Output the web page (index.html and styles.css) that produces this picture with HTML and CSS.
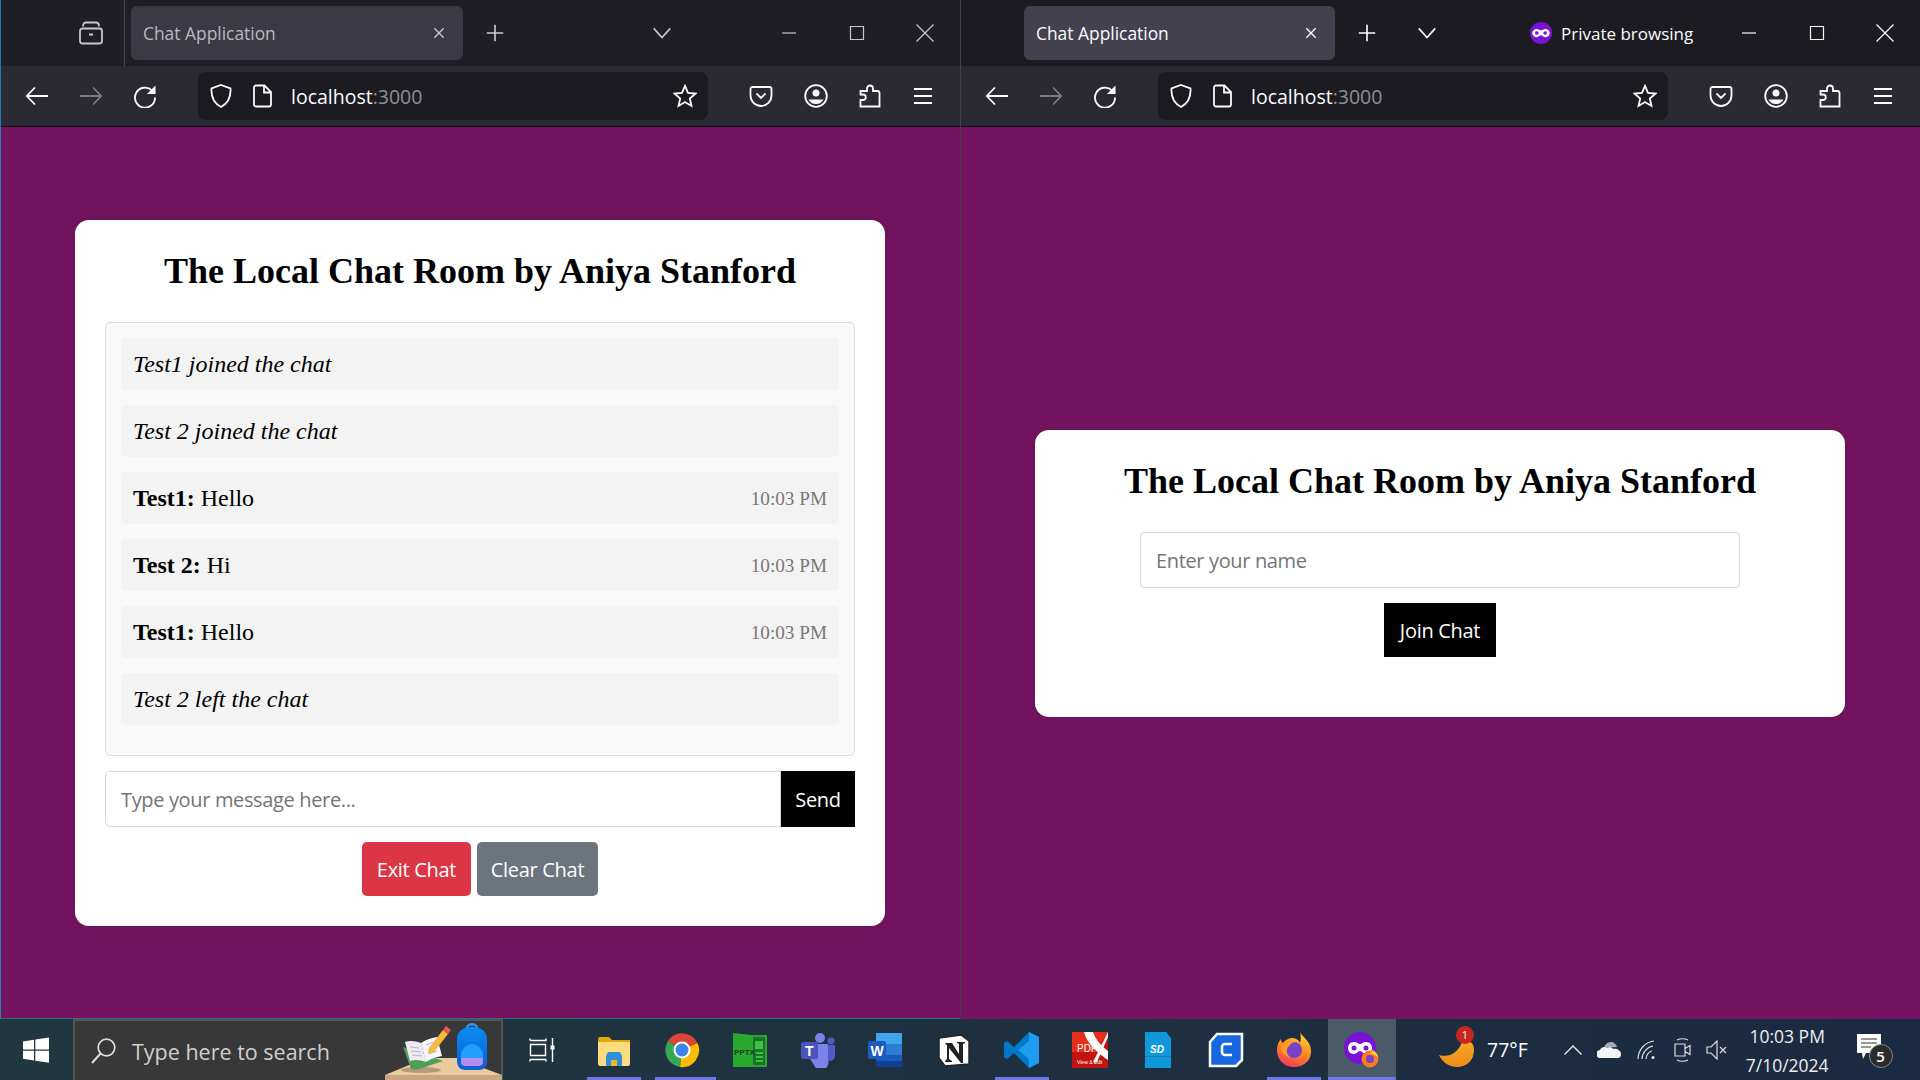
FILE: index.html
```html
<!DOCTYPE html>
<html lang="en">
  <head>
    <meta charset="UTF-8" />
    <meta name="viewport" content="width=device-width, initial-scale=1.0" />
    <title>Chat Application</title>
    <link rel="stylesheet" href="styles.css">
  </head>
  <body>
    <!-- shared browser icons -->
    <svg class="sprite" width="0" height="0">
      <symbol id="i-tabs" viewBox="0 0 24 24"><path d="M4 5.5C4 3 5 1.5 7 1.500h10c2 0 3 1.500 3 4M3.500 7.500h17a2.500 2.500 0 0 1 2.500 2.500v10a2.500 2.500 0 0 1-2.500 2.500h-17A2.500 2.500 0 0 1 1 20V10a2.500 2.500 0 0 1 2.500-2.500zM10 13.500h4"/></symbol>
      <symbol id="i-x" viewBox="0 0 24 24"><path d="M5 5l14 14M19 5L5 19"/></symbol>
      <symbol id="i-wx" viewBox="0 0 24 24"><path d="M3.500 3.500l17 17M20.500 3.500l-17 17"/></symbol>
      <symbol id="i-plus" viewBox="0 0 24 24"><path d="M12 3v18M3 12h18"/></symbol>
      <symbol id="i-chev" viewBox="0 0 24 24"><path d="M3 7l9 10 9-10"/></symbol>
      <symbol id="i-back" viewBox="0 0 24 24"><path d="M23 12H2M10 3.500L1.800 12l8.200 8.500"/></symbol>
      <symbol id="i-forward" viewBox="0 0 24 24"><path d="M1 12h21M14 3.500l8.200 8.500L14 20.500"/></symbol>
      <symbol id="i-reload" viewBox="0 0 24 24"><path d="M19 6.500A10 10 0 1 0 22 13.500"/><path class="solid" d="M22.500 1.500v8.500h-8.500z"/></symbol>
      <symbol id="i-shield" viewBox="0 0 24 24"><path d="M12 1l9.500 3.500c.5 8.500-1.500 14.500-9.500 18.500-8-4-10-10-9.500-18.500z"/></symbol>
      <symbol id="i-page" viewBox="0 0 24 24"><path d="M6 1.500h8.500L21 8v12.500a2 2 0 0 1-2 2H6a2 2 0 0 1-2-2v-17a2 2 0 0 1 2-2zM14 1.500V8.500h7"/></symbol>
      <symbol id="i-star" viewBox="0 0 24 24"><path d="M12 1.800l3 7 7.500.7-5.700 5 1.700 7.500-6.500-3.900L5.500 22l1.700-7.500-5.700-5 7.500-.7z"/></symbol>
      <symbol id="i-pocket" viewBox="0 0 24 24"><path d="M3.500 3h17a2 2 0 0 1 2 2v6.500a10.500 10.500 0 0 1-21 0V5a2 2 0 0 1 2-2zM7.500 9.500L12 14l4.500-4.500"/></symbol>
      <symbol id="i-account" viewBox="0 0 24 24"><circle cx="12" cy="12" r="10.800"/><circle class="solid" cx="12" cy="9" r="3.500"/><path class="solid" d="M4.500 15.500h15c-1.500 3-4 4.500-7.500 4.500s-6-1.500-7.500-4.500z"/></symbol>
      <symbol id="i-ext" viewBox="0 0 24 24"><path d="M2.500 22.500v-6.500h2.500a2.500 2.500 0 0 0 0-5.500H2.500V7h6.500V4.500a3 3 0 0 1 6 0V7h4.500a2 2 0 0 1 2 2v13.500z"/></symbol>
      <symbol id="i-menu" viewBox="0 0 24 24"><path d="M3 5h18M3 12h18M3 19h18"/></symbol>
      <symbol id="i-min" viewBox="0 0 24 24"><path d="M5 12h14"/></symbol>
      <symbol id="i-max" viewBox="0 0 24 24"><path d="M5.500 5.500h13v13h-13z"/></symbol>
    </svg>

    <div class="screen">
      <!-- left window: chat view -->
      <section class="window window-left">
        <div class="tabbar tabbar-dim">
          <svg class="icon ic-tabs"><use href="#i-tabs"/></svg>
          <span class="tab-divider"></span>
          <div class="tab tab-left">
            <span class="tab-title">Chat Application</span>
            <svg class="icon ic-tabx"><use href="#i-x"/></svg>
          </div>
          <svg class="icon ic-plus"><use href="#i-plus"/></svg>
          <svg class="icon ic-chev chev-left"><use href="#i-chev"/></svg>
          <div class="win-buttons">
            <svg class="icon"><use href="#i-min"/></svg>
            <svg class="icon"><use href="#i-max"/></svg>
            <svg class="icon"><use href="#i-wx"/></svg>
          </div>
        </div>
        <div class="toolbar">
          <svg class="icon nav"><use href="#i-back"/></svg>
          <svg class="icon nav off"><use href="#i-forward"/></svg>
          <svg class="icon nav"><use href="#i-reload"/></svg>
          <div class="urlbar">
            <svg class="icon ic-shield"><use href="#i-shield"/></svg>
            <svg class="icon ic-page"><use href="#i-page"/></svg>
            <span class="url">localhost<span class="url-port">:3000</span></span>
            <svg class="icon ic-star"><use href="#i-star"/></svg>
          </div>
          <svg class="icon tool first"><use href="#i-pocket"/></svg>
          <svg class="icon tool"><use href="#i-account"/></svg>
          <svg class="icon tool ext"><use href="#i-ext"/></svg>
          <svg class="icon tool"><use href="#i-menu"/></svg>
        </div>
        <main class="page">
          <div class="card">
            <h1>The Local Chat Room by Aniya Stanford</h1>
            <div class="messages">
              <div class="msg note">Test1 joined the chat</div>
              <div class="msg note">Test 2 joined the chat</div>
              <div class="msg"><span><b>Test1:</b> Hello</span><span class="time">10:03 PM</span></div>
              <div class="msg"><span><b>Test 2:</b> Hi</span><span class="time">10:03 PM</span></div>
              <div class="msg"><span><b>Test1:</b> Hello</span><span class="time">10:03 PM</span></div>
              <div class="msg note">Test 2 left the chat</div>
            </div>
            <form class="send-row">
              <input class="field" type="text" placeholder="Type your message here..." />
              <button class="btn btn-black btn-send" type="button">Send</button>
            </form>
            <div class="actions">
              <button class="btn btn-red" type="button">Exit Chat</button>
              <button class="btn btn-grey" type="button">Clear Chat</button>
            </div>
          </div>
        </main>
      </section>

      <!-- right window: private browsing, join view -->
      <section class="window window-right">
        <div class="tabbar">
          <div class="tab tab-right">
            <span class="tab-title">Chat Application</span>
            <svg class="icon ic-tabx"><use href="#i-x"/></svg>
          </div>
          <svg class="icon ic-plus"><use href="#i-plus"/></svg>
          <svg class="icon ic-chev chev-right"><use href="#i-chev"/></svg>
          <div class="private">
            <svg class="ic-private" viewBox="0 0 24 24"><circle cx="12" cy="12" r="12" fill="#7a12d4"/><path d="M7.500 7.500c2 0 3 1.500 4.500 1.500s2.500-1.500 4.500-1.500c3 0 5 2 5 4.500s-2 4.500-4.500 4.500c-2.500 0-3.500-2-5-2s-2.500 2-5 2C4.500 16.500 2.500 14.500 2.500 12s2-4.500 5-4.500z" fill="#fff"/><circle cx="7.500" cy="12" r="2" fill="#7a12d4"/><circle cx="16.500" cy="12" r="2" fill="#7a12d4"/></svg>
            <span>Private browsing</span>
          </div>
          <div class="win-buttons">
            <svg class="icon"><use href="#i-min"/></svg>
            <svg class="icon"><use href="#i-max"/></svg>
            <svg class="icon"><use href="#i-wx"/></svg>
          </div>
        </div>
        <div class="toolbar">
          <svg class="icon nav"><use href="#i-back"/></svg>
          <svg class="icon nav off"><use href="#i-forward"/></svg>
          <svg class="icon nav"><use href="#i-reload"/></svg>
          <div class="urlbar">
            <svg class="icon ic-shield"><use href="#i-shield"/></svg>
            <svg class="icon ic-page"><use href="#i-page"/></svg>
            <span class="url">localhost<span class="url-port">:3000</span></span>
            <svg class="icon ic-star"><use href="#i-star"/></svg>
          </div>
          <svg class="icon tool first"><use href="#i-pocket"/></svg>
          <svg class="icon tool"><use href="#i-account"/></svg>
          <svg class="icon tool ext"><use href="#i-ext"/></svg>
          <svg class="icon tool"><use href="#i-menu"/></svg>
        </div>
        <main class="page">
          <div class="card">
            <h1>The Local Chat Room by Aniya Stanford</h1>
            <form class="join-form">
              <input class="field field-name" type="text" placeholder="Enter your name" />
              <button class="btn btn-black btn-join" type="button">Join Chat</button>
            </form>
          </div>
        </main>
      </section>
    </div>

    <footer class="taskbar">
      <div class="start">
        <svg width="26" height="26" viewBox="0 0 26 26"><path fill="#fff" d="M0 4.500l11-1.700v9.700H0zM12.300 2.600L26 .5v12H12.300zM0 13.800h11v9.700L0 21.800zM12.300 13.800H26v12l-13.700-2.100z"/></svg>
      </div>
      <div class="search">
        <svg class="ic-search" width="26" height="26" viewBox="0 0 26 26"><circle cx="15.500" cy="9.500" r="8.300" fill="none" stroke="#ddd" stroke-width="1.700"/><path d="M9.500 15.500L1 25" stroke="#ddd" stroke-width="2" fill="none"/></svg>
        <span class="search-text">Type here to search</span>
        <svg class="search-art" width="118" height="60" viewBox="0 0 118 60">
          <defs><linearGradient id="bag" x1="0" y1="0" x2="0" y2="1"><stop offset="0" stop-color="#0a8cf5"/><stop offset="1" stop-color="#0a5fd0"/></linearGradient></defs>
          <path fill="#e9cb9f" d="M0 55L41 38h31l45 17v5H0z"/>
          <path fill="#c9a67e" d="M0 55h117v5H0z"/>
          <ellipse cx="36" cy="50" rx="20" ry="3" fill="#b7987a"/>
          <path fill="#4f9e57" d="M18 27l40 14-27 9-5-1z"/>
          <path fill="#eeeaf2" d="M20 22c5-2 11-1 16 1l5 19c-5-2-11-3-16-1z"/>
          <path fill="#f8f6fa" d="M36 23c4-3 10-5 16-6l5 19c-6 1-12 3-16 6z"/>
          <path stroke="#b9b5c4" stroke-width="1" fill="none" d="M25 27l9 1M26 31l10 1M27 35l10 1M41 25l8-3M43 30l8-3M44 34l8-3"/>
          <path fill="#f5b942" d="M44 28l14-18 5 4-14 18-6 2z"/>
          <path fill="#ea5a4f" d="M58 10l3-4 5 4-3 4z"/>
          <path fill="url(#bag)" d="M72 20c0-9 6-13 15-13s15 4 15 13v21c0 5-3 9-8 9H80c-5 0-8-4-8-9z"/>
          <path fill="none" stroke="#2a8ff0" stroke-width="2.500" d="M82 8c0-5 10-5 10 0"/>
          <path fill="#1fa0ff" d="M76 36c0-7 5-12 11-12s11 5 11 12v4H76z"/>
          <path fill="#b58cf2" d="M76 38h22v4c0 3-2 4-5 4H81c-3 0-5-1-5-4z"/>
        </svg>
      </div>
      <div class="task-icons">
        <div class="slot slot-view">
          <svg width="26" height="24" viewBox="0 0 26 24" fill="none" stroke="#fff" stroke-width="1.400"><path d="M1 2.500h16V.5M1 .5v2M1.500 6.500h15v11h-15zM1 21.500h16M1 21.500v2M17 21.500v2M23.500 0v24"/><rect class="dot" x="21.500" y="7.500" width="4" height="4" fill="#fff" stroke="none"/></svg>
        </div>
        <div class="slot open">
          <svg class="app" viewBox="0 0 36 36"><path fill="#e0a90e" d="M2 7a2 2 0 0 1 2-2h9l3 3h18v5H2z"/><path fill="#fcdc7c" d="M2 10h30a2 2 0 0 1 2 2v20a2 2 0 0 1-2 2H4a2 2 0 0 1-2-2z"/><path fill="#2f8fd8" d="M10 34V24l2-4h12l2 4v10h-5v-6h-6v6z"/><path fill="#f3b71b" d="M15 28h6v6h-6z"/></svg>
        </div>
        <div class="slot open open-stack">
          <svg class="app" viewBox="0 0 36 36"><path fill="#db4437" d="M18 18L4 9A17 17 0 0 1 33.500 11z"/><path fill="#34a853" d="M18 18L4 9A17 17 0 0 0 16 35z"/><path fill="#fbbc05" d="M18 18l15.500-7A17 17 0 0 1 16 35z"/><circle cx="18" cy="18" r="8.500" fill="#fff"/><circle cx="18" cy="18" r="6.500" fill="#3f83ea"/></svg>
        </div>
        <div class="slot">
          <svg class="app" viewBox="0 0 36 36"><path fill="#28a82e" d="M1 1l19 2h15v32H20l-19 0z"/><path fill="#1d6f2b" d="M21 5h12v28H21z"/><path fill="#3dc043" d="M23 9h8v8h-8zM24 20h7v2h-7zM24 24h7v2h-7zM24 28h7v2h-7z"/><text class="pptx" x="2" y="23">PPTX</text></svg>
        </div>
        <div class="slot">
          <svg class="app" viewBox="0 0 36 36"><circle cx="20" cy="6" r="5" fill="#7b83eb"/><circle cx="31" cy="9" r="3.500" fill="#5059c9"/><path fill="#5059c9" d="M25 13h10v11a5 5 0 0 1-8 4z"/><path fill="#7b83eb" d="M10 12h18v16a7 7 0 0 1-14 5l-4-6z"/><rect x="1" y="10" width="17" height="17" rx="2" fill="#4b53bc"/><text class="app-letter" x="5" y="24">T</text></svg>
        </div>
        <div class="slot">
          <svg class="app" viewBox="0 0 36 36"><path fill="#41a5ee" d="M8 1h26v11H8z"/><path fill="#2b7cd3" d="M8 12h26v11H8z"/><path fill="#185abd" d="M8 23h26v6H8z"/><path fill="#103f91" d="M8 29h26v6H8z"/><rect x="0" y="9" width="18" height="18" rx="2" fill="#1a5cc0"/><text class="app-letter" x="2.500" y="24">W</text></svg>
        </div>
        <div class="slot">
          <svg class="app" viewBox="0 0 36 36"><path fill="#fff" stroke="#222" stroke-width="1.500" d="M3 6l22-3 8 6v23l-24 2-6-8z"/><path fill="#222" d="M10 11h6l7 11V12l-2-1v-1h8v1l-2 1v19h-2L13 16v11l3 2v1H9v-1l2-2V13l-2-1z"/></svg>
        </div>
        <div class="slot open">
          <svg class="app" viewBox="0 0 36 36"><path fill="#0078c8" d="M25 0l10 5v26l-10 5-15-15-7 6-3-2v-14l3-2 7 6z"/><path fill="#1f9cf0" d="M25 0l10 5v26l-10 5zM25 9L14 18l11 9z" fill-rule="evenodd"/></svg>
        </div>
        <div class="slot">
          <svg class="app" viewBox="0 0 36 36"><path fill="#c1140f" d="M0 0h36v36H0z"/><path fill="#e7301c" d="M0 0h36L24 20H0z"/><path fill="#fff" d="M12 0h9c2 6 6 12 15 19v9C24 20 15 11 12 0zM36 0v5L25 30h-4z"/><text class="pdf-big" x="5" y="20">PDF</text><text class="pdf-small" x="5" y="32">View &amp; Edit</text></svg>
        </div>
        <div class="slot">
          <svg class="app" viewBox="0 0 36 36"><path fill="#0f98dc" d="M4 0h21l5 6v30H4z" transform="translate(1)"/><path fill="#0b80bf" d="M5 24h26v1H5zM8 0h1v4H8z"/><text class="sd" x="10" y="21">SD</text></svg>
        </div>
        <div class="slot">
          <svg class="app" viewBox="0 0 36 36"><path fill="#1667e0" stroke="#fff" stroke-width="2.500" d="M9 2h25v26l-6 6H2V10z"/><path fill="none" stroke="#fff" stroke-width="2.500" d="M24 12h-7a3 3 0 0 0-3 3v5a3 3 0 0 0 3 3h7"/></svg>
        </div>
        <div class="slot open">
          <svg class="app" viewBox="0 0 36 36">
            <defs><linearGradient id="fx" x1="0.700" y1="0" x2="0.300" y2="1"><stop offset="0" stop-color="#ffd43a"/><stop offset="0.500" stop-color="#ff8a1f"/><stop offset="1" stop-color="#f5365f"/></linearGradient></defs>
            <path fill="url(#fx)" d="M24 0c1 4 10 8 11 18 1 10-7 17-17 17S1 28 1 18c0-4 1-8 4-11 0 2 1 3 2 4 2-3 5-4 8-5 5 0 8 2 9 5 1-4 1-7 0-11z"/>
            <circle cx="18" cy="18" r="8" fill="#7542c8"/>
            <path fill="#ff9a1f" d="M5 13c3-3 9-5 14-3-3 1-5 2-6 4-3 3-3 8 1 11-6-1-10-6-9-12z"/>
          </svg>
        </div>
        <div class="slot open active">
          <svg class="app" viewBox="0 0 36 36">
            <circle cx="16" cy="16" r="16" fill="#7a12d4"/>
            <path fill="#fff" d="M10 10c3 0 4 2 6 2s3-2 6-2c4 0 6 3 6 6s-2 6-6 6c-3 0-4-3-6-3s-3 3-6 3c-4 0-6-3-6-6s2-6 6-6z"/>
            <circle cx="10" cy="16" r="2.500" fill="#7a12d4"/><circle cx="22" cy="16" r="2.500" fill="#7a12d4"/>
            <circle cx="26" cy="27" r="8.500" fill="#ff7a1f"/><circle cx="26" cy="27" r="4" fill="#7542c8"/>
            <path fill="#ffd43a" d="M28 18c3 1 6 4 6 8-2-3-4-4-7-4z"/>
          </svg>
        </div>
      </div>
      <div class="tray">
        <div class="weather">
          <svg class="ic-moon" width="36" height="36" viewBox="0 0 36 36">
            <defs><linearGradient id="moon" x1="0" y1="0" x2="0" y2="1"><stop offset="0" stop-color="#f5a623"/><stop offset="1" stop-color="#ee8d1a"/></linearGradient></defs>
            <path fill="url(#moon)" d="M0 23c10 3 19-2 23-13 7-2 12 0 12 8 0 10-7 17-17 17C10 35 3 30 0 23z"/>
          </svg>
          <span class="badge">1</span>
          <span class="temp">77°F</span>
        </div>
        <svg class="tray-icon ti-chev" width="18" height="10" viewBox="0 0 18 10" fill="none" stroke="#eee" stroke-width="1.400"><path d="M.5 9.500L9 1l8.500 8.500"/></svg>
        <svg class="tray-icon ti-cloud" width="24" height="16" viewBox="0 0 24 16"><path fill="#a9adb3" d="M7 6c1-4 4-6 7-6 3 0 5 2 6 5z"/><path fill="#f4f5f6" d="M4 16a4 4 0 0 1-1-8c1-3 5-4 7-2 2-1 5-1 6 1l-8 9zM8 16l8-9c3-1 8 1 8 5s-2 4-4 4z"/></svg>
        <svg class="tray-icon ti-wifi" width="18" height="20" viewBox="0 0 18 20" fill="none" stroke="#ddd" stroke-width="1.200"><path d="M1 19C1 10 8 2 17 1M5 19c0-6 5-12 11-13M9 19c0-3 2-7 6-8"/><circle cx="16" cy="17.500" r="1.500" fill="#eee" stroke="none"/></svg>
        <svg class="tray-icon ti-cam" width="17" height="24" viewBox="0 0 17 24" fill="none" stroke="#ddd" stroke-width="1.200"><path d="M3 2c3-1.500 8-1.500 11 0M3 22c3 1.500 8 1.500 11 0M1 6h10v12H1zM11 10.500l5-3v9l-5-3"/></svg>
        <svg class="tray-icon ti-sound" width="21" height="20" viewBox="0 0 21 20" fill="none" stroke="#ddd" stroke-width="1.200"><path d="M1 7h4l6-6v18l-6-6H1zM14 7l6 6M20 7l-6 6"/></svg>
        <div class="clock"><span>10:03 PM</span><span>7/10/2024</span></div>
        <div class="notify">
          <svg width="24" height="26" viewBox="0 0 24 26"><path fill="#fff" d="M0 0h24v19H9l-3 6-1-6H0z"/><path stroke="#333" stroke-width="1.200" d="M4 5h16M4 9h16M4 13h10"/></svg>
          <span class="notify-count">5</span>
        </div>
      </div>
    </footer>
  </body>
</html>
```

FILE: styles.css
```css
* {
  margin: 0;
  padding: 0;
  box-sizing: border-box;
}

body {
  width: 1920px;
  height: 1080px;
  overflow: hidden;
  display: flex;
  flex-direction: column;
  font-family: "Open Sans", sans-serif;
}

.sprite {
  display: none;
}

.screen {
  display: flex;
  height: 1019px;
}

.window {
  position: relative;
  width: 960px;
  display: flex;
  flex-direction: column;
}

/* window edges sit over the content, they take no layout space */
.window::before {
  content: "";
  position: absolute;
  left: 0;
  top: 0;
  bottom: 0;
  width: 1px;
  background-color: #443e4c;
}

.window-left::before {
  background-color: #1b7fb0;
}

.window-left::after {
  content: "";
  position: absolute;
  left: 0;
  right: 0;
  bottom: 0;
  height: 1px;
  background-color: #2f6f80;
}

.icon {
  flex: none;
  width: 24px;
  height: 24px;
  fill: none;
  stroke: #fbfbfe;
  stroke-width: 1.800;
}

.solid {
  fill: #fbfbfe;
  stroke: none;
}

/* tab strip */
.tabbar {
  display: flex;
  align-items: center;
  height: 66px;
  background-color: #1c1b22;
  color: #fbfbfe;
  font-size: 17px;
}

.tabbar-dim {
  background-color: #1f1e26;
  color: #b9b8bf;
}

.tabbar-dim .icon {
  stroke: #c8c7cc;
}

.ic-tabs {
  margin-left: 79px;
}

.tab-divider {
  width: 1px;
  height: 66px;
  margin-left: 21px;
  background-color: #4a4950;
}

.tab {
  display: flex;
  align-items: center;
  justify-content: space-between;
  height: 54px;
  border-radius: 6px;
  padding: 0 16px 0 12px;
  background-color: #42414d;
}

.tab-left {
  width: 332px;
  margin-left: 6px;
  background-color: #3a3944;
}

.tab-right {
  width: 311px;
  margin-left: 64px;
}

.tab-title {
  font-size: 17.400px;
}

.ic-tabx {
  width: 16px;
  height: 16px;
  stroke-width: 2;
}

.ic-plus {
  width: 22px;
  height: 22px;
  stroke-width: 1.800;
  margin-left: 21px;
}

.ic-chev {
  width: 22px;
  height: 22px;
  stroke-width: 1.800;
}

.chev-left {
  margin-left: 145px;
}

.chev-right {
  margin-left: 38px;
}

.private {
  display: flex;
  align-items: center;
  gap: 9px;
  margin-left: 92px;
}

.ic-private {
  width: 22px;
  height: 22px;
}

.win-buttons {
  display: flex;
  align-items: center;
  gap: 44px;
  margin-left: auto;
  padding-right: 23px;
}

.win-buttons .icon {
  stroke-width: 1.200;
}

/* nav toolbar */
.toolbar {
  display: flex;
  align-items: center;
  height: 61px;
  padding-bottom: 1px;
  background-color: #2b2a33;
  border-bottom: 1px solid #0c0c0f;
}

.nav {
  margin-left: 30px;
}

.nav:first-child {
  margin-left: 25px;
}

.off {
  stroke: #7b7a80;
}

.urlbar {
  display: flex;
  align-items: center;
  width: 510px;
  height: 48px;
  margin-left: 41px;
  margin-right: 41px;
  border-radius: 8px;
  background-color: #1c1b22;
}

.ic-shield {
  margin-left: 11px;
}

.ic-page {
  margin-left: 17px;
}

.url {
  margin-left: 17px;
  padding-top: 2px;
  font-size: 19.500px;
  color: #fbfbfe;
}

.url-port {
  color: #8f8e94;
}

.ic-star {
  margin-left: auto;
  margin-right: 11px;
}

.tool {
  margin-right: 30px;
}

.tool.first {
  margin-right: 31px;
}

.tool.ext {
  margin-right: 29px;
}

.tool:last-child {
  margin-right: 0;
}

/* page content */
.page {
  flex: 1;
  display: flex;
  align-items: center;
  justify-content: center;
  background-color: #741460;
  font-family: "Liberation Serif", serif;
}

.card {
  width: 810px;
  padding: 30px;
  border-radius: 14px;
  background-color: #fff;
  box-shadow: 0 0 15px rgba(0, 0, 0, 0.12);
}

h1 {
  margin-bottom: 29px;
  font-size: 36px;
  line-height: 43px;
  text-align: center;
  color: #000;
}

.messages {
  padding: 15px;
  border: 1px solid #ddd;
  border-radius: 5px;
  background-color: #f9f9f9;
}

.msg {
  display: flex;
  align-items: center;
  justify-content: space-between;
  height: 52px;
  margin-bottom: 15px;
  padding: 0 12px;
  border-radius: 5px;
  background-color: #f3f3f3;
  font-size: 24px;
  color: #000;
}

.note {
  font-style: italic;
}

.time {
  padding-top: 1px;
  font-size: 19.200px;
  color: #777;
}

.send-row {
  display: flex;
  margin-top: 15px;
}

.field {
  flex: 1;
  height: 56px;
  padding: 1px 15px 0;
  border: 1px solid #d8d8d8;
  border-radius: 5px 0 0 5px;
  outline: none;
  font-family: "Open Sans", sans-serif;
  font-size: 20px;
  letter-spacing: -0.35px;
  color: #000;
}

.field::placeholder {
  color: #757575;
}

.btn {
  padding-top: 1px;
  border: none;
  color: #fff;
  font-family: "Open Sans", sans-serif;
  font-size: 20px;
  letter-spacing: -0.3px;
}

.btn-black {
  background-color: #000;
}

.btn-send {
  width: 74px;
  height: 56px;
}

.actions {
  display: flex;
  justify-content: center;
  gap: 6px;
  margin-top: 15px;
}

.btn-red,
.btn-grey {
  height: 54px;
  border-radius: 5px;
}

.btn-red {
  width: 109px;
  background-color: #dc3545;
}

.btn-grey {
  width: 121px;
  background-color: #6c757d;
}

.join-form {
  display: flex;
  flex-direction: column;
  align-items: center;
  gap: 15px;
  margin-bottom: 30px;
}

.field-name {
  flex: none;
  width: 600px;
  border-radius: 5px;
}

.btn-join {
  width: 112px;
  height: 54px;
}

/* windows taskbar */
.taskbar {
  display: flex;
  align-items: center;
  height: 61px;
  background: linear-gradient(90deg, #21373f, #1e3040 55%, #1a2a42);
  color: #fff;
}

.start {
  display: flex;
  align-items: center;
  justify-content: center;
  width: 73px;
  height: 100%;
  padding-right: 2px;
}

.search {
  position: relative;
  display: flex;
  align-items: center;
  width: 430px;
  height: 100%;
  padding-left: 16px;
  border: 2px solid #555;
  border-bottom: none;
  background-color: #383838;
}

.search-text {
  margin-left: 15px;
  padding-top: 2px;
  font-size: 21.500px;
  color: #cfcfcf;
}

.search-art {
  position: absolute;
  right: -2px;
  top: -1px;
}

.task-icons {
  display: flex;
  height: 100%;
}

.slot {
  position: relative;
  display: flex;
  align-items: center;
  justify-content: center;
  width: 68px;
  height: 100%;
}

.slot-view {
  width: 77px;
}

.app {
  width: 36px;
  height: 36px;
}

.open::after {
  content: "";
  position: absolute;
  left: 7px;
  right: 7px;
  bottom: 0;
  height: 3px;
  background-color: #6d77ea;
}

.open-stack::after {
  right: 0;
}

.active {
  background-color: #4a5a68;
}

.active::after {
  left: 0;
  right: 0;
}

.pptx {
  font-family: "Liberation Sans", sans-serif;
  font-size: 8px;
  font-weight: 700;
  fill: #123d1a;
}

.app-letter {
  font-family: "Liberation Sans", sans-serif;
  font-size: 14px;
  font-weight: 700;
  fill: #fff;
}

.pdf-big {
  font-family: "Liberation Sans", sans-serif;
  font-size: 10px;
  fill: #fff;
}

.pdf-small {
  font-family: "Liberation Sans", sans-serif;
  font-size: 5px;
  fill: #fff;
}

.sd {
  font-family: "Liberation Sans", sans-serif;
  font-size: 10px;
  font-style: italic;
  font-weight: 700;
  fill: #fff;
}

.tray {
  flex: 1;
  display: flex;
  align-items: center;
  height: 100%;
  padding-left: 43px;
}

.weather {
  position: relative;
  display: flex;
  align-items: center;
}

.badge {
  position: absolute;
  left: 17px;
  top: -6px;
  width: 18px;
  height: 18px;
  border-radius: 50%;
  background-color: #c8261f;
  font-size: 11px;
  line-height: 18px;
  text-align: center;
}

.temp {
  margin-left: 12px;
  font-size: 19.500px;
}

.tray-icon {
  flex: none;
}

.ti-chev {
  margin-left: 36px;
}

.ti-cloud {
  margin-left: 15px;
}

.ti-wifi {
  margin-left: 16px;
}

.ti-cam {
  margin-left: 19px;
}

.ti-sound {
  margin-left: 15px;
}

.clock {
  display: flex;
  flex-direction: column;
  align-items: center;
  gap: 9px;
  margin-left: 19px;
  padding-top: 2px;
  font-size: 17.500px;
  line-height: 20px;
  color: #eee;
}

.notify {
  position: relative;
  margin-left: 28px;
  height: 26px;
  margin-top: -6px;
}

.notify-count {
  position: absolute;
  left: 12px;
  top: 10px;
  width: 24px;
  height: 24px;
  border: 1px solid #888;
  border-radius: 50%;
  background-color: #2b2b2b;
  font-size: 15px;
  font-weight: 600;
  line-height: 22px;
  text-align: center;
}
```
